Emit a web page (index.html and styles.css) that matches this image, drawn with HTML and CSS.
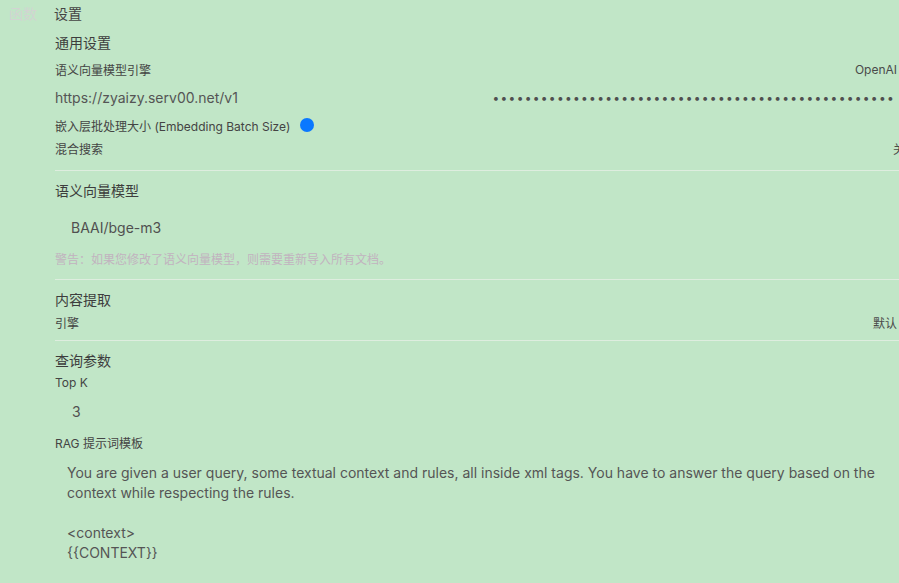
FILE: index.html
```html
<!DOCTYPE html>
<html lang="zh-CN">
<head>
    <meta charset="UTF-8">
    <meta name="viewport" content="width=device-width, initial-scale=1.0">
    <title>设置</title>
    <link rel="stylesheet" href="styles.css">
</head>
<body>
    <div class="tabs">
        <span class="tab muted">函数</span>
        <span class="tab active">设置</span>
    </div>

    <div class="panel">
        <section class="group">
            <div class="group-title">通用设置</div>
            <div class="row row-engine">
                <span class="label">语义向量模型引擎</span>
                <span class="value">OpenAI</span>
            </div>
            <div class="row row-url">
                <span class="url">https://zyaizy.serv00.net/v1</span>
                <span class="secret">••••••••••••••••••••••••••••••••••••••••••••••••••</span>
            </div>
            <div class="row row-batch">
                <span class="label">嵌入层批处理大小 (Embedding Batch Size)</span>
                <span class="info-dot"></span>
            </div>
            <div class="row row-hybrid">
                <span class="label">混合搜索</span>
                <span class="value toggle">关闭</span>
            </div>
        </section>

        <hr class="divider">

        <section class="group">
            <div class="group-title">语义向量模型</div>
            <div class="field">BAAI/bge-m3</div>
            <div class="warning">警告：如果您修改了语义向量模型，则需要重新导入所有文档。</div>
        </section>

        <hr class="divider">

        <section class="group">
            <div class="group-title">内容提取</div>
            <div class="row row-engine2">
                <span class="label">引擎</span>
                <span class="value">默认</span>
            </div>
        </section>

        <hr class="divider divider-tight">

        <section class="group">
            <div class="group-title">查询参数</div>
            <div class="row row-topk">
                <span class="label">Top K</span>
            </div>
            <div class="field field-num">3</div>
            <div class="row row-rag">
                <span class="label">RAG 提示词模板</span>
            </div>
            <textarea class="template">You are given a user query, some textual context and rules, all inside xml tags. You have to answer the query based on the context while respecting the rules.

<context>
{{CONTEXT}}
</context>

<rules>
- If you don't know, just say so.
- If you are not sure, ask for clarification.
</rules></textarea>
        </section>
    </div>
</body>
</html>
```

FILE: styles.css
```css
html, body {
    overflow: hidden;
}
body {
    margin: 0;
    background-color: #c1e6c7;
    font-family: Inter, "Noto Sans CJK SC", sans-serif;
    color: #4a4a4a;
}
.tabs {
    display: flex;
    gap: 17px;
    height: 26px;
    align-items: center;
    padding-left: 9px;
    font-size: 14px;
}
.tab.muted {
    color: #d2d4d2;
}
.tab.active {
    color: #444;
}
.panel {
    margin-left: 55px;
    width: 862px;
    padding-top: 7px;
}
.group-title {
    font-size: 14px;
    line-height: 20px;
    color: #3d3d3d;
}
.row {
    display: flex;
    align-items: center;
    justify-content: space-between;
    font-size: 12px;
}
.label {
    color: #444;
}
.value {
    padding-right: 20px;
    color: #4a4a4a;
}
.toggle {
    padding-right: 0;
}
.row-engine {
    margin-top: 4px;
    height: 24px;
}
.row-url {
    height: 32px;
}
.url {
    font-size: 14px;
    color: #555;
}
.secret {
    font-size: 12px;
    letter-spacing: 1.3px;
    color: #4f4f4f;
    padding-right: 22px;
}
.row-batch {
    height: 24px;
    justify-content: flex-start;
    gap: 10px;
}
.info-dot {
    width: 14px;
    height: 14px;
    border-radius: 50%;
    background-color: #0a78ff;
}
.row-hybrid {
    height: 22px;
}
.divider {
    border: none;
    height: 1px;
    background-color: #deeddf;
    margin: 11px 0 10px;
}
.divider-tight {
    margin-top: 6px;
}
.field {
    margin-top: 8px;
    height: 36px;
    line-height: 37px;
    padding-left: 16px;
    font-size: 14px;
    color: #505050;
}
.warning {
    margin-top: 7px;
    font-size: 12px;
    line-height: 16px;
    color: #c2b3bf;
}
.row-engine2 {
    height: 24px;
}
.row-topk {
    height: 22px;
}
.field-num {
    margin-top: 0;
    padding-left: 17px;
    line-height: 38px;
}
.row-rag {
    height: 26px;
}
.template {
    display: block;
    box-sizing: border-box;
    width: 100%;
    height: 108px;
    margin: 0;
    padding: 8px 12px;
    border: none;
    background: transparent;
    resize: none;
    overflow: hidden;
    font-family: Inter, "Noto Sans CJK SC", sans-serif;
    font-size: 14px;
    line-height: 20px;
    color: #555;
    outline: none;
}
```
